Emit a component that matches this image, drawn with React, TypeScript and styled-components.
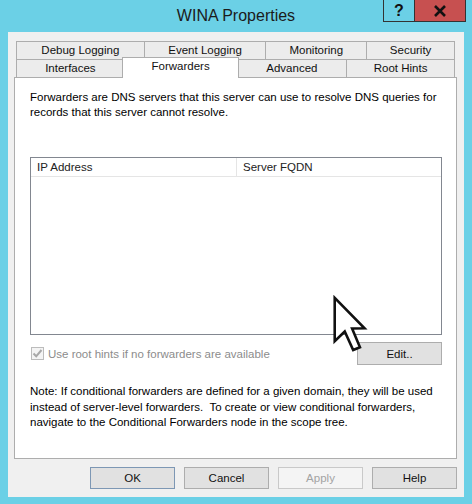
import React from "react";
import styled, { createGlobalStyle } from "styled-components";

const GlobalStyle = createGlobalStyle`
  html, body {
    margin: 0;
    padding: 0;
    background: #6bd0e6;
  }
  body {
    font-family: "Liberation Sans", Arial, sans-serif;
    font-size: 11.5px;
    color: #000;
  }
`;

const topTabs = [
  { label: "Debug Logging", w: 129 },
  { label: "Event Logging", w: 123 },
  { label: "Monitoring", w: 102 },
  { label: "Security", w: 89 },
];

const frontTabs = [
  { label: "Interfaces", w: 109 },
  { label: "Forwarders", w: 118, active: true },
  { label: "Advanced", w: 111 },
  { label: "Root Hints", w: 109 },
];

const App = () => (
  <>
    <GlobalStyle />
    <Window>
      <TitleBar>
        <Title>WINA Properties</Title>
        <Caption>
          <HelpButton>?</HelpButton>
          <CloseButton>
            <svg width="14" height="12" viewBox="0 0 14 12">
              <path d="M2 1 L12 11 M12 1 L2 11" stroke="#111" strokeWidth="2.6" />
            </svg>
          </CloseButton>
        </Caption>
      </TitleBar>

      <Client>
        <TabRow>
          {topTabs.map((t) => (
            <Tab key={t.label} $w={t.w}>
              {t.label}
            </Tab>
          ))}
        </TabRow>
        <TabRow>
          {frontTabs.map((t) => (
            <Tab key={t.label} $w={t.w} $active={t.active}>
              {t.label}
            </Tab>
          ))}
        </TabRow>

        <Panel>
          <Text>
            Forwarders are DNS servers that this server can use to resolve DNS queries for
            <br />
            records that this server cannot resolve.
          </Text>

          <ListView>
            <ListHeader>
              <HeaderCell $w={206}>IP Address</HeaderCell>
              <HeaderCell>Server FQDN</HeaderCell>
            </ListHeader>
          </ListView>

          <CheckRow>
            <CheckLabel>
              <CheckBox>
                <svg width="11" height="11" viewBox="0 0 11 11">
                  <path
                    d="M1.5 5.5 L4.2 8.3 L9.5 2"
                    fill="none"
                    stroke="#a8a8a8"
                    strokeWidth="2"
                  />
                </svg>
              </CheckBox>
              Use root hints if no forwarders are available
            </CheckLabel>
            <Button>Edit..</Button>
          </CheckRow>

          <Note>
            Note: If conditional forwarders are defined for a given domain, they will be used
            <br />
            instead of server-level forwarders.  To create or view conditional forwarders,
            <br />
            navigate to the Conditional Forwarders node in the scope tree.
          </Note>
        </Panel>

        <ButtonRow>
          <Button $default>OK</Button>
          <Button>Cancel</Button>
          <Button $disabled>Apply</Button>
          <Button>Help</Button>
        </ButtonRow>
      </Client>

      <Cursor width="38" height="60" viewBox="-1 -1 14 22">
        <polygon
          points="0,0 0,16 3.7,12.4 6.8,19.2 9.3,18.2 6.4,11.3 11,11.2"
          fill="#fff"
          stroke="#111"
          strokeWidth="0.95"
          strokeLinejoin="miter"
        />
      </Cursor>
    </Window>
  </>
);

export default App;

const Window = styled.div`
  position: relative;
  width: 472px;
  height: 504px;
  background: #6bd0e6;
  display: flex;
  flex-direction: column;
  overflow: hidden;
`;

const TitleBar = styled.div`
  height: 32px;
  flex-shrink: 0;
  display: grid;
  grid-template-columns: 1fr auto 1fr;
`;

const Title = styled.div`
  grid-column: 2;
  font-size: 16px;
  line-height: 31px;
  color: #1b1b1b;
`;

const Caption = styled.div`
  grid-column: 3;
  justify-self: end;
  align-self: start;
  display: flex;
  margin-right: 6px;
  border: 1px solid #333;
  border-top: none;
`;

const HelpButton = styled.div`
  width: 30px;
  height: 21px;
  display: flex;
  align-items: center;
  justify-content: center;
  font-size: 16px;
  font-weight: bold;
  color: #111;
`;

const CloseButton = styled.div`
  width: 50px;
  height: 21px;
  background: #c75050;
  border-left: 1px solid #333;
  display: flex;
  align-items: center;
  justify-content: center;
`;

const Client = styled.div`
  flex: 1;
  margin: 0 8px 7px;
  padding: 9px 7px 8px 6px;
  background: #f0f0f0;
  display: flex;
  flex-direction: column;
`;

const TabRow = styled.div`
  display: flex;
  height: 18px;
  margin: 0 2px;
  flex-shrink: 0;
`;

const Tab = styled.div<{ $w: number; $active?: boolean }>`
  box-sizing: border-box;
  width: ${(p) => p.$w}px;
  height: ${(p) => (p.$active ? 21 : 18)}px;
  margin-left: ${(p) => (p.$active ? -3 : -1)}px;
  margin-right: ${(p) => (p.$active ? -2 : 0)}px;
  margin-top: ${(p) => (p.$active ? -2 : 0)}px;
  border: 1px solid #adadad;
  border-bottom: none;
  background: ${(p) => (p.$active ? "#fff" : "#ececec")};
  position: ${(p) => (p.$active ? "relative" : "static")};
  z-index: ${(p) => (p.$active ? 2 : "auto")};
  line-height: 16px;
  text-align: center;
  white-space: nowrap;
  color: #111;

  &:first-child {
    margin-left: 0;
  }
`;

const Panel = styled.div`
  flex: 1;
  background: #fff;
  border: 1px solid #adadad;
  padding: 12px 14px 0 15px;
  display: flex;
  flex-direction: column;
`;

const Text = styled.div`
  line-height: 15px;
  white-space: pre;
`;

const ListView = styled.div`
  box-sizing: border-box;
  height: 178px;
  margin-top: 37px;
  border: 1px solid #828790;
  background: #fff;
`;

const ListHeader = styled.div`
  display: flex;
  height: 18px;
  border-bottom: 1px solid #e5e5e5;
`;

const HeaderCell = styled.div<{ $w?: number }>`
  box-sizing: border-box;
  ${(p) => (p.$w ? `width: ${p.$w}px; border-right: 1px solid #e5e5e5;` : "flex: 1;")}
  padding-left: 6px;
  line-height: 18px;
  color: #222;
`;

const CheckRow = styled.div`
  display: flex;
  align-items: center;
  justify-content: space-between;
  margin-top: 7px;
`;

const CheckLabel = styled.label`
  display: flex;
  align-items: center;
  gap: 4px;
  color: #8c8c8c;
`;

const CheckBox = styled.span`
  box-sizing: border-box;
  width: 13px;
  height: 13px;
  margin-left: 1px;
  border: 1px solid #bcbcbc;
  background: #f4f4f4;
  display: flex;
  align-items: center;
  justify-content: center;
`;

const Button = styled.div<{ $default?: boolean; $disabled?: boolean }>`
  box-sizing: border-box;
  width: 85px;
  height: 23px;
  display: flex;
  align-items: center;
  justify-content: center;
  background: ${(p) => (p.$disabled ? "#f4f4f4" : "#e1e1e1")};
  border: 1px solid
    ${(p) => (p.$default ? "#7d97b4" : p.$disabled ? "#c9c9c9" : "#adadad")};
  color: ${(p) => (p.$disabled ? "#a3a3a3" : "#111")};
`;

const Note = styled.div`
  margin-top: 19px;
  line-height: 15.5px;
  white-space: pre;
`;

const ButtonRow = styled.div`
  display: flex;
  justify-content: flex-end;
  gap: 9px;
  margin-top: 8px;
  height: 22px;

  & > div {
    height: 22px;
  }
`;

const Cursor = styled.svg`
  position: absolute;
  left: 332px;
  top: 295px;
  filter: blur(0.4px);
  pointer-events: none;
`;
